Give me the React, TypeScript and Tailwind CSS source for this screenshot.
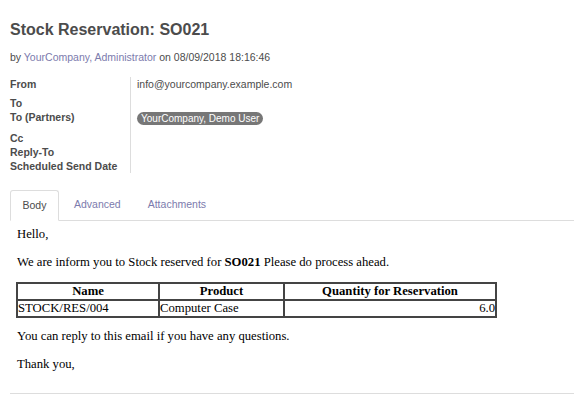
import React from "react";

export default function App() {
  const sans = { fontFamily: '"Liberation Sans", Arial, sans-serif' };
  const serif = { fontFamily: '"Liberation Serif", "Times New Roman", serif' };
  const cell = "border border-[#444] p-0 h-[17px] leading-[15px]";
  return (
    <div className="w-[574px] h-[406px] bg-white overflow-hidden" style={sans}>
      <div className="pl-[10px] pt-[20px]">
        <h1 className="text-[16px] font-bold text-[#4c4c4c] leading-[20px]">Stock Reservation: SO021</h1>
        <div className="mt-[10px] text-[10.5px] leading-[14px] text-[#4c4c4c]">
          by <span className="text-[#7c7bad]">YourCompany, Administrator</span> on 08/09/2018 18:16:46
        </div>
        <div className="mt-[13px] flex text-[10.5px] leading-[14px] text-[#4c4c4c]">
          <div className="w-[120px] font-bold">
            <div>From</div>
            <div className="mt-[5px]">To</div>
            <div>To (Partners)</div>
            <div className="mt-[7px]">Cc</div>
            <div>Reply-To</div>
            <div>Scheduled Send Date</div>
          </div>
          <div className="border-l border-[#ddd] pl-[6px]">
            <div>info@yourcompany.example.com</div>
            <div className="mt-[21px] inline-flex items-center h-[13px] px-[4px] rounded-full bg-[#777] text-white text-[10px] leading-[13px]">
              YourCompany, Demo User
            </div>
          </div>
        </div>
        <div className="mt-[17px] flex border-b border-[#ddd] text-[10.5px] leading-[14px]">
          <div className="w-[49px] h-[31px] -mb-px border border-[#ddd] border-b-white rounded-t-[3px] bg-white flex items-center justify-center pb-[2px] text-[#4c4c4c]">
            Body
          </div>
          <div className="h-[30px] flex items-center pb-[2px] pl-[15px] text-[#7c7bad]">Advanced</div>
          <div className="h-[30px] flex items-center pb-[2px] pl-[27px] text-[#7c7bad]">Attachments</div>
        </div>
        <div className="pl-[7px] text-[12.7px] leading-[15px] text-black" style={serif}>
          <p className="mt-[6px]">Hello,</p>
          <p className="mt-[13px]">
            We are inform you to Stock reserved for <b>SO021</b> Please do process ahead.
          </p>
          <table className="mt-[12px] -ml-px w-[481px] border-separate border-spacing-0 border border-[#444]">
            <thead>
              <tr>
                <th className={`${cell} w-[142px]`}>Name</th>
                <th className={`${cell} w-[125px]`}>Product</th>
                <th className={cell}>Quantity for Reservation</th>
              </tr>
            </thead>
            <tbody>
              <tr>
                <td className={`${cell} text-left`}>STOCK/RES/004</td>
                <td className={`${cell} text-left`}>Computer Case</td>
                <td className={`${cell} text-right`}>6.0</td>
              </tr>
            </tbody>
          </table>
          <p className="mt-[11px]">You can reply to this email if you have any questions.</p>
          <p className="mt-[13px]">Thank you,</p>
        </div>
        <div className="mt-[21px] border-t border-[#ddd]"></div>
      </div>
    </div>
  );
}
